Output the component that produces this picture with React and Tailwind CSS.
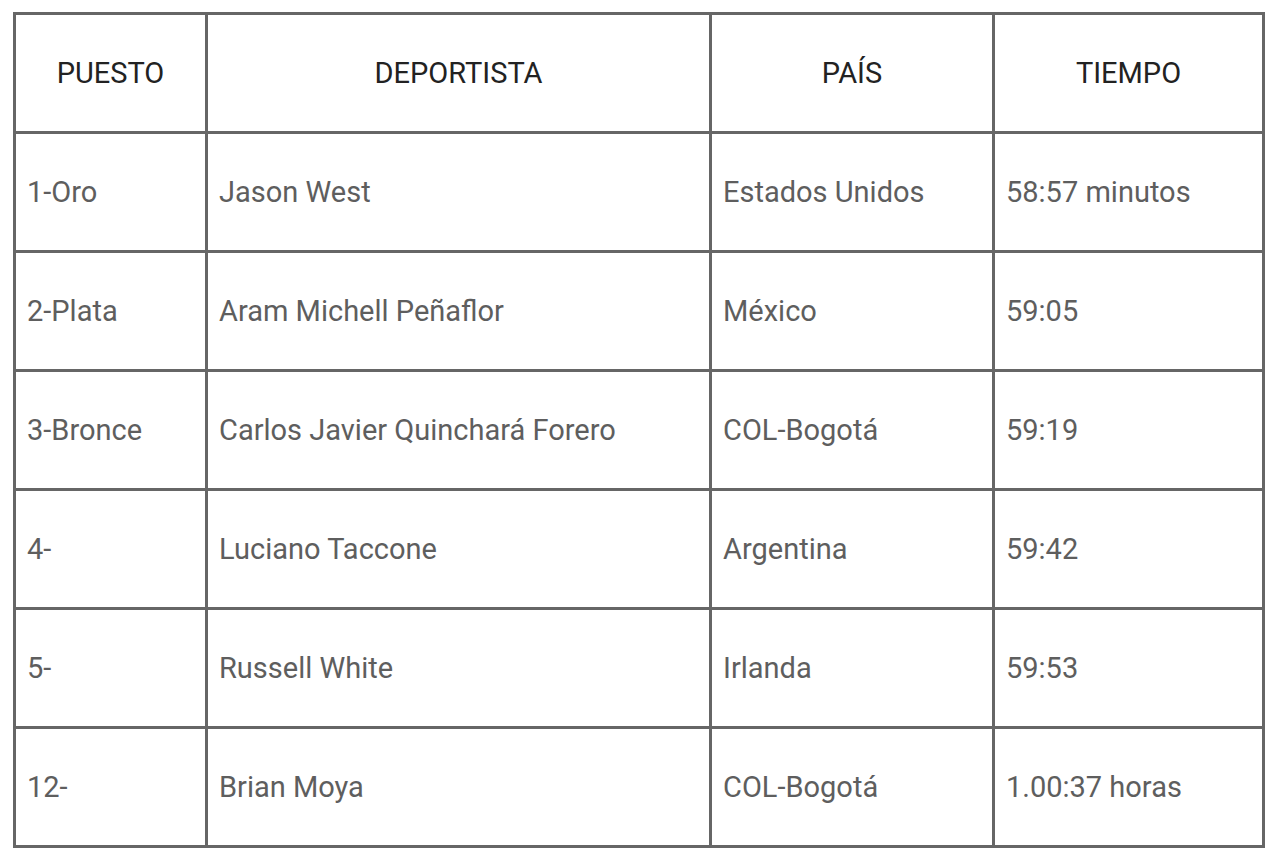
const headers = ['PUESTO', 'DEPORTISTA', 'PAÍS', 'TIEMPO']

const rows = [
  ['1-Oro', 'Jason West', 'Estados Unidos', '58:57 minutos'],
  ['2-Plata', 'Aram Michell Peñaflor', 'México', '59:05'],
  ['3-Bronce', 'Carlos Javier Quinchará Forero', 'COL-Bogotá', '59:19'],
  ['4-', 'Luciano Taccone', 'Argentina', '59:42'],
  ['5-', 'Russell White', 'Irlanda', '59:53'],
  ['12-', 'Brian Moya', 'COL-Bogotá', '1.00:37 horas'],
]

export default function App() {
  return (
    <div className="min-h-screen bg-white pl-[13px] pt-[12px]" style={{ fontFamily: 'Roboto, "Liberation Sans", sans-serif' }}>
      <div className="grid w-[1252px] grid-cols-[189px_501px_280px_267px] auto-rows-[116px] gap-[3px] bg-[#666] p-[3px]">
        {headers.map(h => (
          <div key={h} className="flex items-center justify-center bg-white pt-[2px] text-[29px] text-[#222]">
            {h}
          </div>
        ))}
        {rows.map(row =>
          row.map((cell, i) => (
            <div key={row[0] + i} className="flex items-center bg-white pl-[11px] pr-3 pt-[2px] text-[29px] text-[#5e5e5e]">
              {cell}
            </div>
          ))
        )}
      </div>
    </div>
  )
}
